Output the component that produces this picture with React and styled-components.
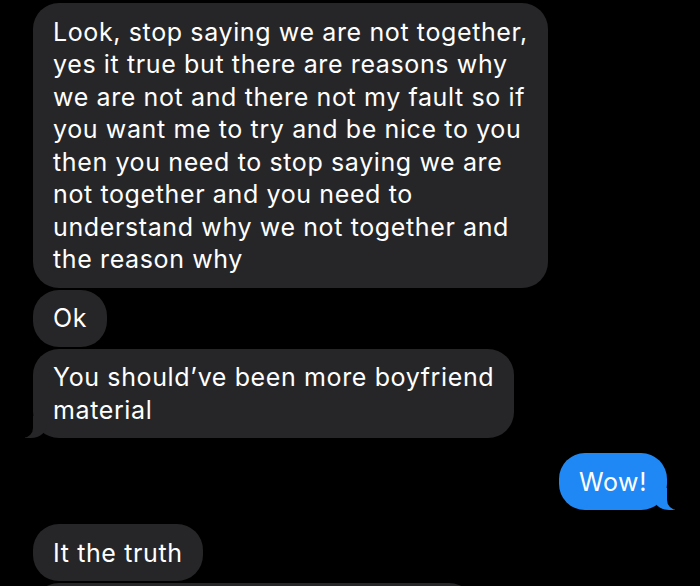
import React from 'react';
import styled, { createGlobalStyle } from 'styled-components';

const GlobalStyle = createGlobalStyle`
  html, body {
    margin: 0;
    padding: 0;
    background: #000;
  }
  body {
    height: 586px;
    overflow: hidden;
    font-family: Inter, "Noto Sans", sans-serif;
  }
`;

const Thread = styled.div`
  display: flex;
  flex-direction: column;
  padding: 3px 33px 0;
`;

const Bubble = styled.div`
  position: relative;
  align-self: ${(p) => (p.$mine ? 'flex-end' : 'flex-start')};
  margin-top: ${(p) => (p.$gap === undefined ? 2 : p.$gap)}px;
  padding: 12.5px 20px 12px;
  border-radius: 26px;
  background: ${(p) => (p.$mine ? '#1f88f4' : '#262628')};
  color: #fff;
  font-size: 25px;
  letter-spacing: 0.62px;
  line-height: 32.5px;
  white-space: nowrap;
  width: ${(p) => (p.$width ? `${p.$width}px` : 'auto')};
  min-height: ${(p) => (p.$width ? '80px' : 'auto')};
  box-sizing: border-box;

  ${(p) =>
    p.$tail &&
    `
    &::before {
      content: "";
      position: absolute;
      bottom: 0;
      ${p.$mine ? 'right' : 'left'}: -8px;
      width: 22px;
      height: 22px;
      background: ${p.$mine ? '#1f88f4' : '#262628'};
      ${p.$mine ? 'border-bottom-left-radius' : 'border-bottom-right-radius'}: 16px 14px;
    }
    &::after {
      content: "";
      position: absolute;
      bottom: 0;
      ${p.$mine ? 'right' : 'left'}: -10px;
      width: 10px;
      height: 22px;
      background: #000;
      ${p.$mine ? 'border-bottom-left-radius' : 'border-bottom-right-radius'}: 10px;
    }
  `}
`;

const messages = [
  {
    lines: [
      'Look, stop saying we are not together,',
      'yes it true but there are reasons why',
      'we are not and there not my fault so if',
      'you want me to try and be nice to you',
      'then you need to stop saying we are',
      'not together and you need to',
      'understand why we not together and',
      'the reason why',
    ],
    gap: 0,
  },
  { lines: ['Ok'] },
  { lines: ['You should\u2019ve been more boyfriend', 'material'], tail: true },
  { lines: ['Wow!'], mine: true, tail: true, gap: 15 },
  { lines: ['It the truth'], gap: 14 },
  { lines: [''], width: 442 },
];

export default function App() {
  return (
    <>
      <GlobalStyle />
      <Thread>
        {messages.map((m, i) => (
          <Bubble key={i} $mine={m.mine} $tail={m.tail} $gap={m.gap} $width={m.width}>
            {m.lines.map((l, j) => (
              <React.Fragment key={j}>
                {j > 0 && <br />}
                {l}
              </React.Fragment>
            ))}
          </Bubble>
        ))}
      </Thread>
    </>
  );
}
